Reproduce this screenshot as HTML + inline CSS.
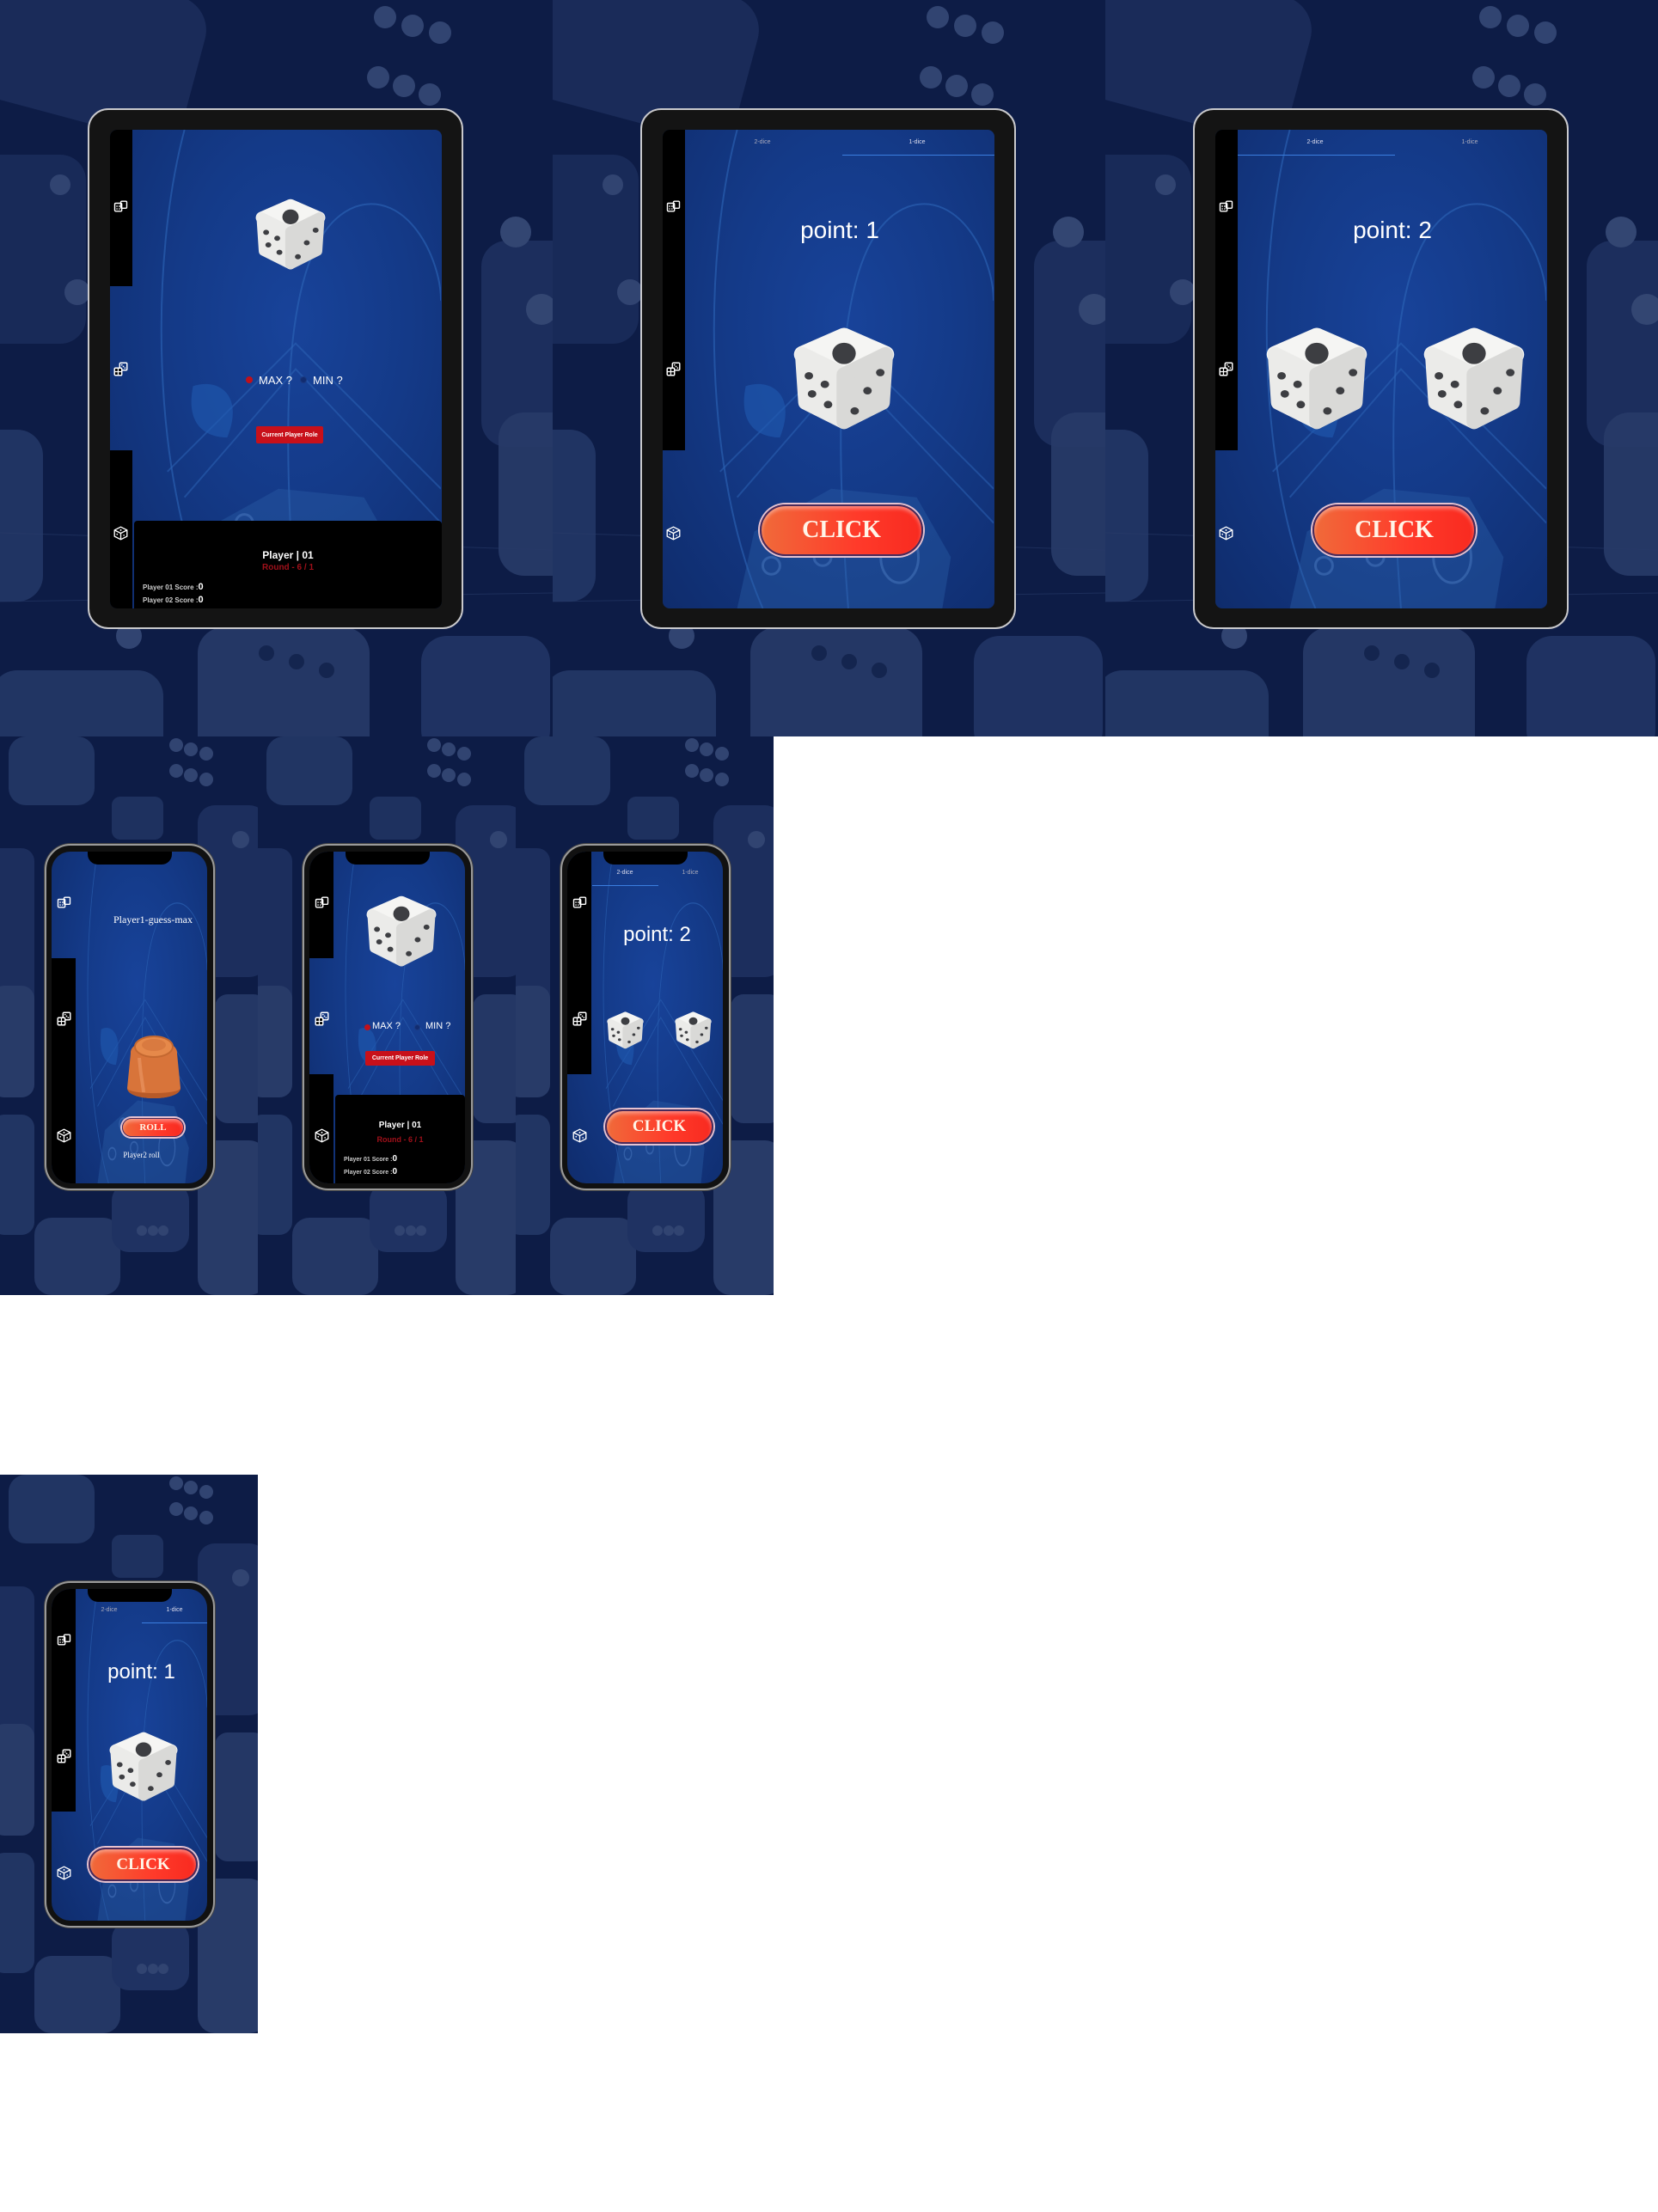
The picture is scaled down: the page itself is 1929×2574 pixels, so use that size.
<!DOCTYPE html>
<html><head><meta charset="utf-8"><style>
*{margin:0;padding:0;box-sizing:border-box}
body{width:1929px;height:2574px;background:#fff;position:relative;overflow:hidden;font-family:"Liberation Sans",sans-serif}
.bg{position:absolute;background:#0d1c46;overflow:hidden}
.bg svg.pat{position:absolute;left:0;top:0;width:100%;height:100%;opacity:.6}
.abs{position:absolute}
.tab-frame{position:absolute;background:#141414;border:2px solid #c9c9cc;border-radius:24px}
.scr{position:absolute;overflow:hidden;background:radial-gradient(ellipse at 55% 40%,#18439a 0%,#143a88 45%,#0f2c6c 100%)}
.side{position:absolute;left:0;top:0;height:100%}
.blk{position:absolute;left:0;width:100%;background:#000}
.c{position:absolute;color:#fff;text-align:center;white-space:nowrap}
.btn{position:absolute;border-radius:999px;background:linear-gradient(90deg,#f06a3a,#ff3a2a 60%,#f82a20);border:2px solid #4a2a5a;box-shadow:0 0 0 2px #e6c2cf,inset 0 3px 4px rgba(255,255,255,.4);color:#fff5e8;font-family:"Liberation Serif",serif;font-weight:bold;display:flex;align-items:center;justify-content:center}
.phone{position:absolute;background:#111;border:2px solid #9a9a9a;border-radius:30px;box-shadow:0 0 0 1px #444}
.notch{position:absolute;background:#000;border-radius:0 0 12px 12px}
</style></head><body>
<svg width="0" height="0" style="position:absolute">
<defs>
<symbol id="dice" viewBox="0 0 100 100">
<path d="M50 10 L89 27 L50 46 L11 27 Z" fill="#f5f5f3" stroke="#f5f5f3" stroke-width="16" stroke-linejoin="round"/>
<path d="M11 27 L50 46 L50 90 L14 72 Z" fill="#ebebe9" stroke="#ebebe9" stroke-width="14" stroke-linejoin="round"/>
<path d="M50 46 L89 27 L86 72 L50 90 Z" fill="#d9d9d7" stroke="#d9d9d7" stroke-width="14" stroke-linejoin="round"/>
<ellipse cx="50" cy="26" rx="11" ry="10" fill="#3d3e42"/>
<ellipse cx="17" cy="47" rx="4" ry="3.5" fill="#3d3e42"/>
<ellipse cx="32" cy="55" rx="4" ry="3.5" fill="#3d3e42"/>
<ellipse cx="20" cy="64" rx="4" ry="3.5" fill="#3d3e42"/>
<ellipse cx="35" cy="74" rx="4" ry="3.5" fill="#3d3e42"/>
<ellipse cx="84" cy="44" rx="4" ry="3.5" fill="#3d3e42"/>
<ellipse cx="72" cy="61" rx="4" ry="3.5" fill="#3d3e42"/>
<ellipse cx="60" cy="80" rx="4" ry="3.5" fill="#3d3e42"/>
</symbol>
<symbol id="patT" viewBox="0 0 643 857">
<rect x="-20" y="-30" width="250" height="170" rx="40" fill="#2c4275" opacity=".7" transform="rotate(15 100 60)"/>
<circle cx="448" cy="20" r="13" fill="#4a5f8f"/><circle cx="480" cy="30" r="13" fill="#4a5f8f"/><circle cx="512" cy="38" r="13" fill="#4a5f8f"/>
<circle cx="440" cy="90" r="13" fill="#4a5f8f"/><circle cx="470" cy="100" r="13" fill="#4a5f8f"/><circle cx="500" cy="110" r="13" fill="#4a5f8f"/>
<rect x="-40" y="180" width="140" height="220" rx="30" fill="#253a6c" opacity=".8"/>
<circle cx="90" cy="340" r="15" fill="#4a5f8f"/><circle cx="70" cy="215" r="12" fill="#4a5f8f"/>
<rect x="560" y="280" width="120" height="240" rx="30" fill="#263b6d"/>
<circle cx="600" cy="270" r="18" fill="#4d6290"/><circle cx="630" cy="360" r="18" fill="#4d6290"/>
<rect x="580" y="480" width="120" height="190" rx="30" fill="#3a5080" opacity=".9"/>
<rect x="-40" y="500" width="90" height="200" rx="30" fill="#2e4577"/>
<rect x="-10" y="780" width="200" height="120" rx="30" fill="#2f4677"/>
<rect x="230" y="730" width="200" height="160" rx="30" fill="#34497a"/>
<circle cx="310" cy="760" r="9" fill="#1a2b55"/><circle cx="345" cy="770" r="9" fill="#1a2b55"/><circle cx="380" cy="780" r="9" fill="#1a2b55"/>
<circle cx="150" cy="740" r="15" fill="#4a5f8f"/>
<rect x="490" y="740" width="150" height="140" rx="30" fill="#2c4275"/>
<path d="M0 700 L643 690 M0 620 L643 640" stroke="#3a5080" stroke-width="1" opacity=".6"/>
</symbol>
<symbol id="patP" viewBox="0 0 300 650">
<rect x="10" y="0" width="100" height="80" rx="20" fill="#2f4677"/>
<circle cx="205" cy="10" r="8" fill="#4a5f8f"/><circle cx="222" cy="15" r="8" fill="#4a5f8f"/><circle cx="240" cy="20" r="8" fill="#4a5f8f"/>
<circle cx="205" cy="40" r="8" fill="#4a5f8f"/><circle cx="222" cy="45" r="8" fill="#4a5f8f"/><circle cx="240" cy="50" r="8" fill="#4a5f8f"/>
<rect x="130" y="70" width="60" height="50" rx="10" fill="#2a3f70"/>
<rect x="230" y="80" width="80" height="200" rx="20" fill="#263b6d"/>
<circle cx="280" cy="120" r="10" fill="#4a5f8f"/>
<rect x="-20" y="130" width="60" height="220" rx="15" fill="#263b6d"/>
<rect x="-10" y="290" width="50" height="130" rx="15" fill="#3a5080"/>
<rect x="250" y="300" width="60" height="150" rx="15" fill="#34497a"/>
<rect x="-10" y="440" width="50" height="140" rx="15" fill="#2f4677"/>
<rect x="230" y="470" width="80" height="180" rx="20" fill="#3a5080"/>
<rect x="40" y="560" width="100" height="90" rx="20" fill="#34497a"/>
<rect x="130" y="520" width="90" height="80" rx="20" fill="#2c4275"/>
<circle cx="165" cy="575" r="6" fill="#4a5f8f"/><circle cx="178" cy="575" r="6" fill="#4a5f8f"/><circle cx="190" cy="575" r="6" fill="#4a5f8f"/>
</symbol>
<symbol id="scrDeco" viewBox="0 0 360 560">
<path d="M60 0 C20 150 20 400 90 560" stroke="#2d66b8" stroke-width="2" fill="none" opacity=".6"/>
<path d="M190 560 C170 300 180 120 260 90 C320 70 360 150 360 200" stroke="#2d66b8" stroke-width="2" fill="none" opacity=".6"/>
<path d="M40 400 L190 250 L360 420 M60 430 L190 280 L360 460" stroke="#2d66b8" stroke-width="2" fill="none" opacity=".5"/>
<path d="M70 300 C100 290 130 310 110 360 C90 360 60 350 70 300 Z" fill="#1f5ab0" opacity=".6"/>
<path d="M80 470 L170 420 L270 430 L310 500 L300 560 L60 560 Z" fill="#2b5fa8" opacity=".4"/>
<g fill="none" stroke="#4a79c0" stroke-width="3" opacity=".5"><circle cx="130" cy="460" r="10"/><circle cx="100" cy="510" r="10"/><circle cx="160" cy="500" r="10"/><ellipse cx="250" cy="500" rx="22" ry="30"/></g>
</symbol>
<symbol id="i1" viewBox="0 0 14 12"><rect x="1" y="3" width="7" height="8" rx="1" fill="none" stroke="#fff" stroke-width="1.2"/><rect x="7" y="1" width="6" height="7" rx="1" fill="none" stroke="#fff" stroke-width="1.2"/><circle cx="3.2" cy="6" r=".7" fill="#fff"/><circle cx="5.6" cy="6" r=".7" fill="#fff"/><circle cx="3.2" cy="8.6" r=".7" fill="#fff"/><circle cx="5.6" cy="8.6" r=".7" fill="#fff"/></symbol>
<symbol id="i2" viewBox="0 0 14 14"><rect x="6" y="1" width="7" height="7" rx="1" fill="none" stroke="#fff" stroke-width="1.2"/><rect x="1" y="6" width="7" height="7" rx="1" fill="#000" stroke="#fff" stroke-width="1.2"/><circle cx="8" cy="3" r=".7" fill="#fff"/><circle cx="11" cy="6" r=".7" fill="#fff"/><circle cx="9.5" cy="4.5" r=".7" fill="#fff"/><line x1="1" y1="9.5" x2="8" y2="9.5" stroke="#fff"/><line x1="4.5" y1="6" x2="4.5" y2="13" stroke="#fff"/></symbol>
<symbol id="i3" viewBox="0 0 14 14"><path d="M7 1 L13 4 L13 10 L7 13 L1 10 L1 4 Z M1 4 L7 7 L13 4 M7 7 L7 13" fill="none" stroke="#fff" stroke-width="1.1" stroke-linejoin="round"/><circle cx="7" cy="4" r=".8" fill="#fff"/><circle cx="3.5" cy="8" r=".7" fill="#fff"/><circle cx="10" cy="9" r=".7" fill="#fff"/></symbol>
</defs></svg>

<div class="bg" style="left:0;top:0;width:643px;height:857px"><svg class="pat" viewBox="0 0 643 857" preserveAspectRatio="none"><use href="#patT"/></svg></div>
<div class="bg" style="left:643px;top:0;width:643px;height:857px"><svg class="pat" viewBox="0 0 643 857" preserveAspectRatio="none"><use href="#patT"/></svg></div>
<div class="bg" style="left:1286px;top:0;width:643px;height:857px"><svg class="pat" viewBox="0 0 643 857" preserveAspectRatio="none"><use href="#patT"/></svg></div>

<div class="tab-frame" style="left:102px;top:126px;width:437px;height:606px"></div>
<div class="scr" style="left:128px;top:151px;width:386px;height:557px;border-radius:8px">
 <svg class="abs" style="left:26px;top:0" width="360" height="557" viewBox="0 0 360 560"><use href="#scrDeco"/></svg>
 <div class="side" style="width:26px"><div class="blk" style="top:0;height:182px"></div><div class="blk" style="top:373px;height:184px"></div></div>
 <svg class="abs" style="left:4px;top:82px" width="17" height="14"><use href="#i1"/></svg>
 <svg class="abs" style="left:4px;top:270px" width="17" height="17"><use href="#i2"/></svg>
 <svg class="abs" style="left:4px;top:461px" width="17" height="17"><use href="#i3"/></svg>
 <svg class="abs" style="left:167px;top:77px" width="86" height="90"><use href="#dice"/></svg>
 <div class="abs" style="left:158px;top:287px;width:8px;height:8px;border-radius:50%;background:#c0101a"></div>
 <div class="c" style="left:173px;top:284px;font-size:13px">MAX ?</div>
 <div class="abs" style="left:221px;top:287px;width:8px;height:8px;border-radius:50%;border:1px solid #1b3a80;background:#122c70"></div>
 <div class="c" style="left:236px;top:284px;font-size:13px">MIN ?</div>
 <div class="abs" style="left:170px;top:345px;width:78px;height:20px;background:#c8101a;border-radius:2px;color:#fff;font-size:7px;font-weight:bold;display:flex;align-items:center;justify-content:center">Current Player Role</div>
 <div class="abs" style="left:28px;top:455px;width:358px;height:102px;background:#000;border-radius:4px 4px 0 0">
  <div class="c" style="left:0;width:100%;top:33px;font-size:12px;font-weight:bold">Player | 01</div>
  <div class="c" style="left:0;width:100%;top:49px;font-size:10px;font-weight:bold;color:#a0101a">Round - 6 / 1</div>
  <div class="abs" style="left:10px;top:71px;color:#ccc;font-size:8px;font-weight:bold">Player 01 Score :<span style="color:#fff;font-size:11px">0</span></div>
  <div class="abs" style="left:10px;top:86px;color:#ccc;font-size:8px;font-weight:bold">Player 02 Score :<span style="color:#fff;font-size:11px">0</span></div>
 </div>
</div>

<div class="tab-frame" style="left:745px;top:126px;width:437px;height:606px"></div>
<div class="scr" style="left:771px;top:151px;width:386px;height:557px;border-radius:8px">
 <svg class="abs" style="left:26px;top:0" width="360" height="557" viewBox="0 0 360 560"><use href="#scrDeco"/></svg>
 <div class="side" style="width:26px"><div class="blk" style="top:0;height:373px"></div></div>
 <svg class="abs" style="left:4px;top:82px" width="17" height="14"><use href="#i1"/></svg>
 <svg class="abs" style="left:4px;top:270px" width="17" height="17"><use href="#i2"/></svg>
 <svg class="abs" style="left:4px;top:461px" width="17" height="17"><use href="#i3"/></svg>
 <div class="c" style="left:26px;width:180px;top:11px;font-size:7px;color:#aab">2-dice</div>
 <div class="c" style="left:206px;width:180px;top:11px;font-size:7px;color:#dde">1-dice</div>
 <div class="abs" style="left:209px;top:29px;width:177px;height:1px;background:#3b7ee0"></div>
 <div class="c" style="left:26px;width:360px;top:101px;font-size:28px">point: 1</div>
 <svg class="abs" style="left:149px;top:225px" width="124" height="130"><use href="#dice"/></svg>
 <div class="btn" style="left:113px;top:436px;width:190px;height:60px;font-size:28px">CLICK</div>
</div>

<div class="tab-frame" style="left:1388px;top:126px;width:437px;height:606px"></div>
<div class="scr" style="left:1414px;top:151px;width:386px;height:557px;border-radius:8px">
 <svg class="abs" style="left:26px;top:0" width="360" height="557" viewBox="0 0 360 560"><use href="#scrDeco"/></svg>
 <div class="side" style="width:26px"><div class="blk" style="top:0;height:373px"></div></div>
 <svg class="abs" style="left:4px;top:82px" width="17" height="14"><use href="#i1"/></svg>
 <svg class="abs" style="left:4px;top:270px" width="17" height="17"><use href="#i2"/></svg>
 <svg class="abs" style="left:4px;top:461px" width="17" height="17"><use href="#i3"/></svg>
 <div class="c" style="left:26px;width:180px;top:11px;font-size:7px;color:#dde">2-dice</div>
 <div class="c" style="left:206px;width:180px;top:11px;font-size:7px;color:#aab">1-dice</div>
 <div class="abs" style="left:26px;top:29px;width:183px;height:1px;background:#3b7ee0"></div>
 <div class="c" style="left:26px;width:360px;top:101px;font-size:28px">point: 2</div>
 <svg class="abs" style="left:56px;top:225px" width="124" height="130"><use href="#dice"/></svg>
 <svg class="abs" style="left:239px;top:225px" width="124" height="130"><use href="#dice"/></svg>
 <div class="btn" style="left:113px;top:436px;width:190px;height:60px;font-size:28px">CLICK</div>
</div>

<div class="bg" style="left:0;top:857px;width:300px;height:650px"><svg class="pat" viewBox="0 0 300 650" preserveAspectRatio="none"><use href="#patP"/></svg></div>
<div class="bg" style="left:300px;top:857px;width:300px;height:650px"><svg class="pat" viewBox="0 0 300 650" preserveAspectRatio="none"><use href="#patP"/></svg></div>
<div class="bg" style="left:600px;top:857px;width:300px;height:650px"><svg class="pat" viewBox="0 0 300 650" preserveAspectRatio="none"><use href="#patP"/></svg></div>
<div class="bg" style="left:0;top:1716px;width:300px;height:650px"><svg class="pat" viewBox="0 0 300 650" preserveAspectRatio="none"><use href="#patP"/></svg></div>

<div class="phone" style="left:52px;top:982px;width:198px;height:403px"></div>
<div class="scr" style="left:60px;top:991px;width:181px;height:386px;border-radius:22px">
 <svg class="abs" style="left:28px;top:0" width="153" height="386" viewBox="0 0 360 560" preserveAspectRatio="none"><use href="#scrDeco"/></svg>
 <div class="side" style="width:28px"><div class="blk" style="top:124px;height:262px"></div></div>
 <svg class="abs" style="left:6px;top:52px" width="17" height="14"><use href="#i1"/></svg>
 <svg class="abs" style="left:6px;top:186px" width="17" height="17"><use href="#i2"/></svg>
 <svg class="abs" style="left:6px;top:322px" width="17" height="17"><use href="#i3"/></svg>
 <div class="notch" style="left:42px;top:0;width:98px;height:15px"></div>
 <div class="c" style="left:28px;width:180px;top:72px;font-size:12px;font-family:'Liberation Serif',serif">Player1-guess-max</div>
 <svg class="abs" style="left:82px;top:205px" width="74" height="88" viewBox="0 0 74 88">
  <path d="M10 30 C8 10 66 10 64 30 L68 70 C68 86 6 86 6 70 Z" fill="#d8743a"/>
  <path d="M6 70 C6 86 68 86 68 70 C68 78 6 78 6 70Z" fill="#b85a28"/>
  <ellipse cx="37" cy="22" rx="22" ry="12" fill="#e6894a" stroke="#c46830" stroke-width="2"/>
  <ellipse cx="37" cy="20" rx="14" ry="7" fill="#d97a40"/>
  <path d="M20 35 C22 60 25 70 25 75" stroke="#f0a070" stroke-width="4" fill="none" opacity=".5"/>
 </svg>
 <div class="btn" style="left:82px;top:310px;width:72px;height:22px;font-size:11px;border-width:1px">ROLL</div>
 <div class="c" style="left:28px;width:153px;top:348px;font-size:9px;font-family:'Liberation Serif',serif">Player2 roll</div>
</div>

<div class="phone" style="left:352px;top:982px;width:198px;height:403px"></div>
<div class="scr" style="left:360px;top:991px;width:181px;height:386px;border-radius:22px">
 <svg class="abs" style="left:28px;top:0" width="153" height="386" viewBox="0 0 360 560" preserveAspectRatio="none"><use href="#scrDeco"/></svg>
 <div class="side" style="width:28px"><div class="blk" style="top:0;height:124px"></div><div class="blk" style="top:259px;height:127px"></div></div>
 <svg class="abs" style="left:6px;top:52px" width="17" height="14"><use href="#i1"/></svg>
 <svg class="abs" style="left:6px;top:186px" width="17" height="17"><use href="#i2"/></svg>
 <svg class="abs" style="left:6px;top:322px" width="17" height="17"><use href="#i3"/></svg>
 <div class="notch" style="left:42px;top:0;width:98px;height:15px"></div>
 <svg class="abs" style="left:64px;top:46px" width="86" height="94"><use href="#dice"/></svg>
 <div class="abs" style="left:64px;top:201px;width:7px;height:7px;border-radius:50%;background:#c0101a"></div>
 <div class="c" style="left:73px;top:197px;font-size:11px">MAX ?</div>
 <div class="abs" style="left:122px;top:201px;width:7px;height:7px;border-radius:50%;background:#122c70;border:1px solid #1b3a80"></div>
 <div class="c" style="left:135px;top:197px;font-size:11px">MIN ?</div>
 <div class="abs" style="left:65px;top:232px;width:81px;height:17px;background:#c8101a;border-radius:2px;color:#fff;font-size:7px;font-weight:bold;display:flex;align-items:center;justify-content:center">Current Player Role</div>
 <div class="abs" style="left:30px;top:283px;width:151px;height:103px;background:#000;border-radius:4px 4px 0 0">
  <div class="c" style="left:0;width:100%;top:30px;font-size:10px;font-weight:bold">Player | 01</div>
  <div class="c" style="left:0;width:100%;top:47px;font-size:9px;font-weight:bold;color:#a0101a">Round - 6 / 1</div>
  <div class="abs" style="left:10px;top:69px;color:#ccc;font-size:7px;font-weight:bold">Player 01 Score :<span style="color:#fff;font-size:10px">0</span></div>
  <div class="abs" style="left:10px;top:84px;color:#ccc;font-size:7px;font-weight:bold">Player 02 Score :<span style="color:#fff;font-size:10px">0</span></div>
 </div>
</div>

<div class="phone" style="left:652px;top:982px;width:198px;height:403px"></div>
<div class="scr" style="left:660px;top:991px;width:181px;height:386px;border-radius:22px">
 <svg class="abs" style="left:28px;top:0" width="153" height="386" viewBox="0 0 360 560" preserveAspectRatio="none"><use href="#scrDeco"/></svg>
 <div class="side" style="width:28px"><div class="blk" style="top:0;height:259px"></div></div>
 <svg class="abs" style="left:6px;top:52px" width="17" height="14"><use href="#i1"/></svg>
 <svg class="abs" style="left:6px;top:186px" width="17" height="17"><use href="#i2"/></svg>
 <svg class="abs" style="left:6px;top:322px" width="17" height="17"><use href="#i3"/></svg>
 <div class="notch" style="left:42px;top:0;width:98px;height:15px"></div>
 <div class="c" style="left:29px;width:76px;top:21px;font-size:7px;color:#dde">2-dice</div>
 <div class="c" style="left:105px;width:76px;top:21px;font-size:7px;color:#aab">1-dice</div>
 <div class="abs" style="left:29px;top:39px;width:77px;height:1px;background:#3b7ee0"></div>
 <div class="c" style="left:28px;width:153px;top:83px;font-size:24px">point: 2</div>
 <svg class="abs" style="left:45px;top:184px" width="45" height="48"><use href="#dice"/></svg>
 <svg class="abs" style="left:124px;top:184px" width="45" height="48"><use href="#dice"/></svg>
 <div class="btn" style="left:44px;top:300px;width:126px;height:40px;font-size:19px">CLICK</div>
</div>

<div class="phone" style="left:52px;top:1840px;width:198px;height:403px"></div>
<div class="scr" style="left:60px;top:1849px;width:181px;height:386px;border-radius:22px">
 <svg class="abs" style="left:28px;top:0" width="153" height="386" viewBox="0 0 360 560" preserveAspectRatio="none"><use href="#scrDeco"/></svg>
 <div class="side" style="width:28px"><div class="blk" style="top:0;height:259px"></div></div>
 <svg class="abs" style="left:6px;top:52px" width="17" height="14"><use href="#i1"/></svg>
 <svg class="abs" style="left:6px;top:186px" width="17" height="17"><use href="#i2"/></svg>
 <svg class="abs" style="left:6px;top:322px" width="17" height="17"><use href="#i3"/></svg>
 <div class="notch" style="left:42px;top:0;width:98px;height:15px"></div>
 <div class="c" style="left:29px;width:76px;top:21px;font-size:7px;color:#aab">2-dice</div>
 <div class="c" style="left:105px;width:76px;top:21px;font-size:7px;color:#dde">1-dice</div>
 <div class="abs" style="left:105px;top:39px;width:76px;height:1px;background:#3b7ee0"></div>
 <div class="c" style="left:28px;width:153px;top:83px;font-size:24px">point: 1</div>
 <svg class="abs" style="left:65px;top:163px" width="84" height="88"><use href="#dice"/></svg>
 <div class="btn" style="left:43px;top:301px;width:127px;height:39px;font-size:19px">CLICK</div>
</div>
</body></html>
